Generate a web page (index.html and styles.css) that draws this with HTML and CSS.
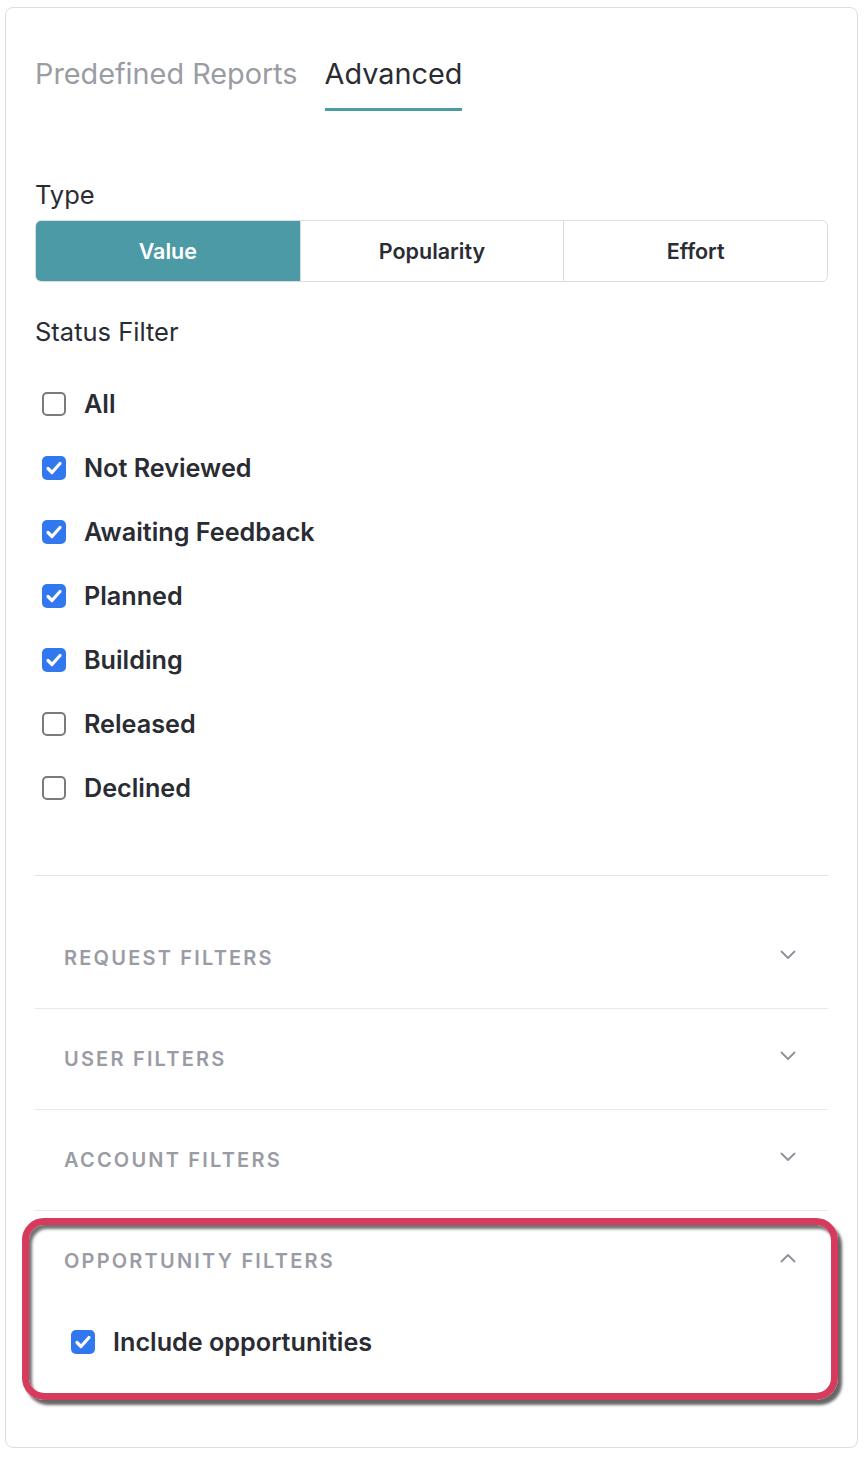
FILE: index.html
```html
<!DOCTYPE html>
<html lang="en">
<head>
    <meta charset="UTF-8">
    <meta name="viewport" content="width=device-width, initial-scale=1.0">
    <title>Reports</title>
    <link rel="stylesheet" href="styles.css">
</head>
<body>
    <div class="card">
        <div class="tabs">
            <div class="tab">Predefined Reports</div>
            <div class="tab active">Advanced</div>
        </div>

        <div class="field-label type-label">Type</div>
        <div class="segmented">
            <div class="segment selected">Value</div>
            <div class="segment">Popularity</div>
            <div class="segment">Effort</div>
        </div>

        <div class="field-label status-label">Status Filter</div>
        <div class="checks">
            <div class="check"><span class="box"></span>All</div>
            <div class="check"><span class="box on"><svg viewBox="0 0 24 24"><path d="M6 12.5l4 4 8-9"/></svg></span>Not Reviewed</div>
            <div class="check"><span class="box on"><svg viewBox="0 0 24 24"><path d="M6 12.5l4 4 8-9"/></svg></span>Awaiting Feedback</div>
            <div class="check"><span class="box on"><svg viewBox="0 0 24 24"><path d="M6 12.5l4 4 8-9"/></svg></span>Planned</div>
            <div class="check"><span class="box on"><svg viewBox="0 0 24 24"><path d="M6 12.5l4 4 8-9"/></svg></span>Building</div>
            <div class="check"><span class="box"></span>Released</div>
            <div class="check"><span class="box"></span>Declined</div>
        </div>

        <div class="accordion">
            <div class="acc-item">
                <div class="acc-head">Request Filters
                    <svg class="chev" viewBox="0 0 16 10"><path d="M1.5 1.5l6.5 6.5 6.5-6.5"/></svg>
                </div>
            </div>
            <div class="acc-item">
                <div class="acc-head">User Filters
                    <svg class="chev" viewBox="0 0 16 10"><path d="M1.5 1.5l6.5 6.5 6.5-6.5"/></svg>
                </div>
            </div>
            <div class="acc-item">
                <div class="acc-head">Account Filters
                    <svg class="chev" viewBox="0 0 16 10"><path d="M1.5 1.5l6.5 6.5 6.5-6.5"/></svg>
                </div>
            </div>
            <div class="acc-item open">
                <div class="acc-head">Opportunity Filters
                    <svg class="chev" viewBox="0 0 16 10"><path d="M1.5 8.5l6.5-6.5 6.5 6.5"/></svg>
                </div>
                <div class="acc-body">
                    <div class="check"><span class="box on"><svg viewBox="0 0 24 24"><path d="M6 12.5l4 4 8-9"/></svg></span>Include opportunities</div>
                </div>
                <div class="highlight"></div>
            </div>
        </div>
    </div>
</body>
</html>
```

FILE: styles.css
```css
body {
    margin: 0;
    background-color: #fff;
    font-family: Inter, "Noto Sans", sans-serif;
    color: #2a2c33;
}

.card {
    margin: 7px 6px 10px 5px;
    padding: 0 29px 85px;
    border: 1px solid #dcdde2;
    border-radius: 8px;
    background-color: #fff;
}

/* tabs */
.tabs {
    display: flex;
    gap: 27px;
    margin-top: 49px;
}

.tab {
    font-size: 28.8px;
    line-height: 34px;
    padding-bottom: 17px;
    border-bottom: 3px solid transparent;
    color: #9a9ca4;
}

.tab.active {
    color: #2a2c33;
    border-bottom-color: #4c9aa6;
}

.field-label {
    font-size: 25.5px;
    line-height: 30px;
}

.type-label {
    margin-top: 69px;
}

/* segmented control */
.segmented {
    display: grid;
    grid-template-columns: repeat(3, 1fr);
    height: 62px;
    margin-top: 10px;
    border: 1px solid #dcdde2;
    border-radius: 6px;
    overflow: hidden;
    box-sizing: border-box;
}

.segment {
    display: flex;
    align-items: center;
    justify-content: center;
    font-size: 21.5px;
    font-weight: 600;
    border-left: 1px solid #dcdde2;
}

.segment:first-child {
    border-left: none;
}

.segment.selected {
    background-color: #4c9aa6;
    color: #fff;
}

.status-label {
    margin-top: 35px;
}

/* checkboxes */
.checks {
    margin-top: 25px;
    padding-left: 7px;
}

.check {
    display: flex;
    align-items: center;
    gap: 18px;
    height: 64px;
    font-size: 25.2px;
    font-weight: 600;
}

.box {
    width: 24px;
    height: 24px;
    box-sizing: border-box;
    border: 2px solid #7a7b80;
    border-radius: 5px;
    background-color: #fff;
    flex-shrink: 0;
}

.box.on {
    border: none;
    background-color: #3077f0;
}

.box svg {
    display: block;
    width: 24px;
    height: 24px;
    fill: none;
    stroke: #fff;
    stroke-width: 3.2;
    stroke-linecap: round;
    stroke-linejoin: round;
}

/* accordion */
.accordion {
    margin-top: 55px;
    border-top: 1px solid #e2e3e7;
    padding-top: 32px;
}

.acc-item {
    position: relative;
    border-bottom: 1px solid #e8e9ec;
}

.acc-item.open {
    border-bottom: none;
}

.acc-head {
    display: flex;
    align-items: center;
    justify-content: space-between;
    height: 100px;
    padding: 0 32px 0 29px;
    font-size: 20px;
    font-weight: 600;
    letter-spacing: 2.2px;
    text-transform: uppercase;
    color: #9a9ca5;
}

.chev {
    width: 16px;
    height: 10px;
    margin-top: -6px;
    fill: none;
    stroke: #8e909a;
    stroke-width: 1.8;
    stroke-linecap: round;
    stroke-linejoin: round;
}

.acc-body {
    padding: 11px 0 0 36px;
}

.acc-body .check {
    height: 40px;
}

/* annotation box drawn over the open section */
.highlight {
    position: absolute;
    top: 7px;
    left: -13px;
    right: -10px;
    height: 182px;
    box-sizing: border-box;
    border: 7px solid #d63a5c;
    border-radius: 22px;
    box-shadow: 4px 5px 3px rgba(0, 0, 0, 0.6), inset 3px 4px 3px rgba(0, 0, 0, 0.55);
    pointer-events: none;
}
```
